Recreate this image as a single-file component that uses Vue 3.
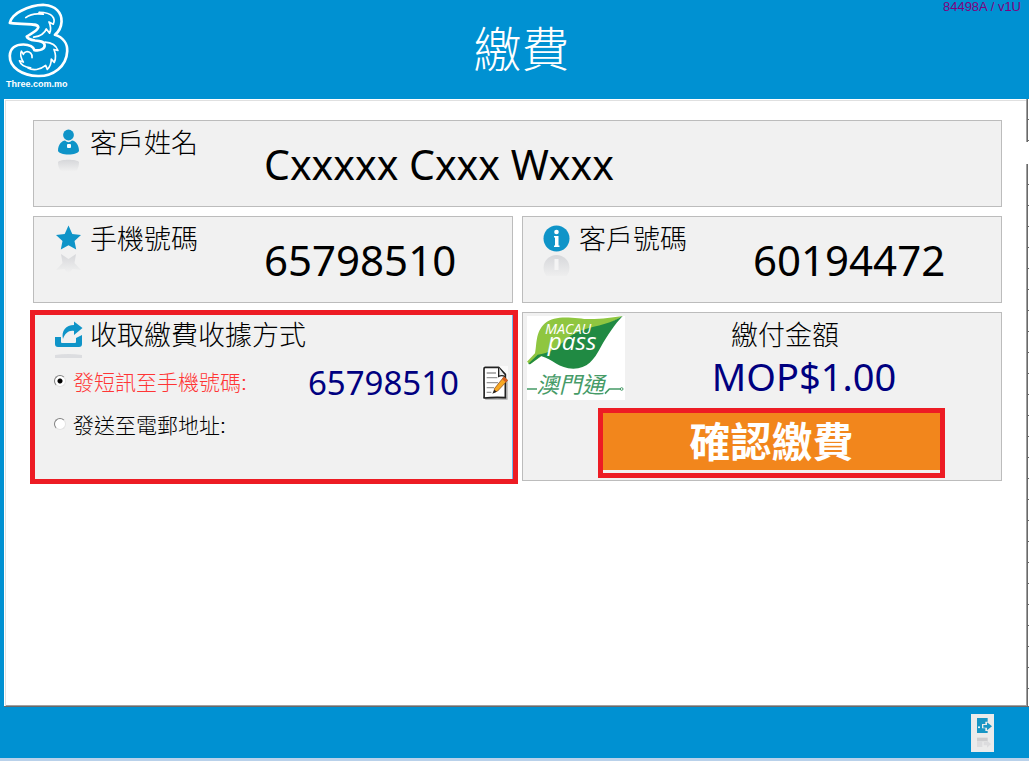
<template>
  <div class="kiosk">
    <header class="topbar">
      <div class="brand">
        <svg class="brand-logo" viewBox="18 6 198 232" fill="none" stroke="#fff" stroke-linejoin="round" stroke-linecap="round">
          <path
            stroke-width="8"
            d="M29 69C31 56 45 41 62 33C90 19 112 14 134 15C166 17 186 38 185 65C184 83 176 96 165 105C190 113 203 132 202 154C200 200 160 230 114 229C66 228 28 203 29 168C30 146 46 134 70 134C89 134 101 142 103 151C121 154 135 147 134 136C133 124 119 123 105 122C91 120 82 116 80 110C89 103 112 94 115 82C112 68 80 76 29 69Z"
          />
          <path
            stroke-width="5"
            d="M77 53C90 43 112 40 130 43L117 37C134 37 151 41 158 50C164 57 163 66 160 73L147 66C153 79 153 91 149 100L139 87C135 99 120 109 101 112"
          />
          <path
            stroke-width="5"
            d="M135 127C153 128 169 137 174 152L162 149C168 163 168 177 163 188L154 178C154 192 149 203 142 209L137 197C120 211 99 213 84 205L92 204C75 203 62 195 58 183L70 187C63 176 59 164 64 154L70 164C72 155 84 153 92 160C97 165 96 171 96 174"
          />
        </svg>
        <span class="brand-name">Three.com.mo</span>
      </div>
      <h1 class="title">繳費</h1>
      <span class="version">84498A / v1U</span>
    </header>

    <div class="body">
      <main class="sheet">
        <section v-for="field in fields" :key="field.id" class="panel field" :class="{ wide: field.wide }">
          <div class="head">
            <svg v-if="field.icon == 'person'" class="icon" viewBox="0 0 36 56">
              <circle cx="18.5" cy="11" r="5.4" fill="#0f94c8" />
              <path fill="#0f94c8" d="M8 27C8 20 12 17 15 16.500Q18.500 20 22 16.500C26 17 29 21 29 27C28 29 24 30.500 18.500 30.500S9 29 8 27Z" />
              <rect x="17" y="20" width="4" height="4" rx="1" fill="#fff" />
              <path fill="url(#fade)" d="M8 38C10 35 27 35 29 38C29 45 26 49 22 49Q18.500 45 15 49C11 48 8 45 8 38Z" />
            </svg>
            <svg v-else-if="field.icon == 'star'" class="icon" viewBox="0 0 36 56">
              <path fill="#0f94c8" d="M18.500 5.500L22.300 14L31 15L24.500 21L26.200 29.500L18.500 25.300L10.800 29.500L12.500 21L6 15L14.700 14Z" />
              <path fill="url(#fade)" d="M11 34L18.500 39L26 34L24.500 43L31 50L22.500 49L18.500 55L14.500 49L6 50L12.500 43Z" />
            </svg>
            <svg v-else class="icon" viewBox="0 0 36 56">
              <circle cx="17.500" cy="18.500" r="13" fill="#0f94c8" />
              <circle cx="17.500" cy="12" r="2.300" fill="#fff" />
              <path fill="#fff" d="M15 16H19.500V25.500H20.500V27H15V25.500H16V17.500H15Z" />
              <circle cx="17.500" cy="48" r="13" fill="url(#fade)" />
              <path fill="#f4f4f4" d="M15.500 39H19.500V50H15.500Z" />
            </svg>
            <h2 class="label">{{ field.label }}</h2>
          </div>
          <p class="value" :class="{ name: field.wide }">{{ field.value }}</p>
        </section>

        <section class="panel receipt">
          <div class="head">
            <svg class="icon" viewBox="0 0 36 56">
              <path fill="#0f94c8" d="M5 21H11V26Q11 27 12 27H25Q26 27 26 26V22L32 19V28Q32 31 29 31H8Q5 31 5 28Z" />
              <path fill="#0f94c8" d="M13 23C11 15 16 9 24 9V5.500L32.500 12L24 19V15C19 14 15 17 13 23Z" />
              <path fill="#dcdde0" d="M5 39Q18 37 32 39V42H5Z" />
            </svg>
            <h2 class="label">收取繳費收據方式</h2>
          </div>
          <div class="option">
            <input id="bySms" v-model="method" type="radio" name="method" value="sms" />
            <label for="bySms" :class="{ active: method == 'sms' }">發短訊至手機號碼:</label>
            <span class="phone">65798510</span>
            <button class="edit" type="button" aria-label="修改">
              <svg viewBox="0 0 78 102">
                <rect width="78" height="102" fill="#fafafa" />
                <path fill="#aaa" d="M8 94H73V40L77 44V101H10Z" />
                <path fill="#fff" stroke="#222" stroke-width="5" stroke-linejoin="round" d="M10 4H50L70 25V95Q40 93 6 96Q7 85 6 50V8Q6 4 10 4Z" />
                <path fill="#eee" stroke="#222" stroke-width="4" d="M50 4V31Q60 26 70 32" />
                <path stroke="#999" stroke-width="4" d="M14 21H42M14 35H46M14 50H48M14 65H36M14 79H28" />
                <path fill="#f7a823" stroke="#7c3b10" stroke-width="2" d="M66 32L77 43L47 75L35 80L38 67Z" />
                <path fill="#d65d20" d="M66 32L77 43L71 49L60 39Z" />
                <path fill="#222" d="M37 71L44 77L31 83Z" />
              </svg>
            </button>
          </div>
          <div class="option">
            <input id="byEmail" v-model="method" type="radio" name="method" value="email" />
            <label for="byEmail">發送至電郵地址:</label>
          </div>
        </section>

        <section class="panel payment">
          <svg class="pass-logo" viewBox="0 0 294 252">
            <rect width="294" height="252" fill="#fff" />
            <path fill="#8fc640" d="M0 137L24 112C30 88 24 49 54 22C88 -9 155 10 190 9C225 9 260 4 287 0L130 90L44 120L9 145Z" />
            <path fill="#208a43" d="M3 144L32 116C66 113 88 96 115 73C150 39 198 35 229 25C254 18 271 9 287 0C264 24 241 58 221 94C201 132 181 158 139 158C95 158 77 129 42 120L9 145Z" />
            <text class="pass-small" x="54" y="53">MACAU</text>
            <text class="pass-big" x="62" y="103">pass</text>
            <text class="pass-zh" x="28" y="230">澳門通</text>
            <path fill="none" stroke="#469b67" stroke-width="5" d="M0 219H30M234 233L247 219H281" />
            <circle cx="284" cy="219" r="4" fill="#fff" stroke="#469b67" stroke-width="3" />
          </svg>
          <div class="pay">
            <h2 class="label">繳付金額</h2>
            <p class="amount">MOP$1.00</p>
          </div>
          <button class="confirm" type="button">確認繳費</button>
        </section>
      </main>
      <div class="edge">
        <span class="edge-top"></span>
        <span class="edge-rest"></span>
      </div>
    </div>

    <footer class="bottombar">
      <button class="exit" type="button" aria-label="離開">
        <svg viewBox="0 0 69 114">
          <rect width="69" height="114" fill="#ebebeb" />
          <path fill="#1896c5" d="M18 12H50V23H43V30H33V43H43V51H50V57H18Z" />
          <path fill="#1896c5" d="M37 33H48V25L63 37L48 49V41H37Z" />
          <circle cx="24" cy="40" r="3" fill="#fff" />
          <path fill="#cdcdcf" d="M18 71H50V82H18Z" />
          <path fill="#dcdcde" d="M18 82H34V99H18ZM38 84H48V80L60 90L48 101V94H38Z" />
        </svg>
      </button>
    </footer>

    <svg class="defs" width="0" height="0" aria-hidden="true">
      <linearGradient id="fade" x1="0" y1="0" x2="0" y2="1">
        <stop offset="0" stop-color="#d6d7da" />
        <stop offset="0.9" stop-color="#f1f1f1" />
      </linearGradient>
    </svg>
  </div>
</template>

<script setup>
import { ref } from "vue";

const method = ref("sms");

const fields = [
  { id: 1, icon: "person", label: "客戶姓名", value: "Cxxxxx Cxxx Wxxx", wide: true },
  { id: 2, icon: "star", label: "手機號碼", value: "65798510" },
  { id: 3, icon: "info", label: "客戶號碼", value: "60194472" }
];
</script>

<style>
body {
  margin: 0;
}
</style>

<style scoped>
.kiosk {
  display: flex;
  flex-direction: column;
  box-sizing: border-box;
  min-height: 100vh;
  background: #0091d2;
  border-bottom: 3px solid #b9d1ea;
  font-family: "Noto Sans", "Noto Sans CJK TC", sans-serif;
  color: #000;
}

h1,
h2,
p {
  margin: 0;
  font-weight: 300;
}

button {
  padding: 0;
  border: none;
  background: none;
  cursor: pointer;
}

svg {
  display: block;
}

.defs {
  position: absolute;
}

/* header */
.topbar {
  display: grid;
  grid-template-columns: 1fr auto 1fr;
  height: 99px;
  padding: 0 8px 0 6px;
}

.brand-logo {
  width: 66px;
  height: 77px;
  margin-top: 2px;
}

.brand-name {
  display: block;
  font: bold 9px/11px "Liberation Sans", sans-serif;
  color: #fff;
}

.title {
  padding-left: 16px;
  font-size: 48px;
  line-height: 92px;
  font-family: "Noto Sans CJK TC", sans-serif;
  color: #fff;
}

.version {
  justify-self: end;
  font: 13px/14px "Liberation Sans", sans-serif;
  color: #800080;
}

/* content */
.body {
  display: flex;
  flex: 1;
  margin-left: 4px;
  background: #fff;
  border-bottom: 1px solid #696969;
  box-shadow: inset 0 -1px #a0a0a0;
}

.sheet {
  display: grid;
  flex: 1;
  grid-template-columns: 1fr 1fr;
  align-content: start;
  gap: 9px;
  padding: 21px 24px 20px 29px;
  box-shadow: inset 1px 1px #fff, inset 2px 2px #e0e0e0;
}

.edge {
  display: flex;
  flex-direction: column;
  justify-content: space-between;
  gap: 22px;
  width: 3px;
}

.edge span {
  box-sizing: border-box;
  border-left: 1px solid #a0a0a0;
  background: linear-gradient(90deg, #696969 50%, transparent 50%), repeating-linear-gradient(#fff 0 20px, #696969 20px 21px);
}

.edge-top {
  height: 43px;
}

.edge-rest {
  flex: 1;
}

.panel {
  position: relative;
  box-sizing: border-box;
  background: #f1f1f1;
  border: 1px solid #bcbcbc;
}

.field {
  display: flex;
  align-items: center;
  height: 87px;
}

.wide {
  grid-column: 1 / -1;
}

.head {
  display: flex;
  align-self: flex-start;
  gap: 4px;
  width: 214px;
  padding-left: 16px;
}

.icon {
  flex: none;
  width: 36px;
  height: 56px;
  margin-top: 3px;
}

.label {
  padding-top: 5px;
  font-size: 27px;
  line-height: 32px;
  font-family: "Noto Sans CJK TC", sans-serif;
  white-space: nowrap;
}

.value {
  font-size: 42px;
  line-height: 56px;
  font-weight: 400;
}

.name {
  font-size: 41px;
}

/* receipt */
.receipt {
  min-height: 169px;
  border-right-color: #6cb8f0;
}

.receipt::after {
  content: "";
  position: absolute;
  inset: -3px -6px -4px -4px;
  border: 5px solid #ed1c24;
  pointer-events: none;
}

.receipt .head {
  height: 53px;
}

.option {
  display: flex;
  align-items: center;
  height: 34px;
  margin-bottom: 9px;
  padding: 0 4px 0 20px;
  font-size: 21px;
  font-weight: 300;
}

.option label {
  flex: 1;
  padding-left: 7px;
  line-height: 34px;
  font-family: "Liberation Sans", "Noto Sans CJK TC", sans-serif;
}

.option .active {
  color: #ff3535;
}

.option input {
  appearance: none;
  box-sizing: border-box;
  width: 12px;
  height: 12px;
  margin: 0 0 4px;
  border: 1px solid;
  border-color: #808080 #e3e3e3 #e3e3e3 #808080;
  border-radius: 50%;
  background: #fff;
}

.option input:checked {
  background: radial-gradient(circle, #000 2px, #fff 3px);
}

.phone {
  margin-right: 23px;
  font-size: 33px;
  line-height: 36px;
  font-weight: 400;
  color: #000080;
}

.edit svg {
  width: 26px;
  height: 34px;
}

/* payment */
.payment {
  display: grid;
  grid-template-columns: 98px 1fr;
  align-content: start;
  padding: 3px 56px 2px 4px;
}

.pass-logo {
  width: 98px;
  height: 84px;
}

.pass-small,
.pass-big {
  font-family: "Open Sans", sans-serif;
  font-style: italic;
  fill: #fff;
}

.pass-small {
  font-size: 43px;
}

.pass-big {
  font-size: 73px;
}

.pass-zh {
  font-family: "Noto Sans CJK TC", sans-serif;
  font-size: 68px;
  font-style: italic;
  font-weight: 400;
  fill: #469b67;
}

.pay {
  text-align: center;
}

.pay .label {
  padding-top: 2px;
}

.amount {
  padding-left: 38px;
  font-size: 38px;
  line-height: 52px;
  font-weight: 400;
  color: #000080;
}

.confirm {
  grid-column: 1 / -1;
  height: 70px;
  margin: 6px 0 0 71px;
  padding-bottom: 8px;
  border: 5px solid #ed1c24;
  background: #f2861c;
  box-shadow: inset 0 -3px #f1f1f1;
  font: bold 41px/50px "Noto Sans CJK TC", sans-serif;
  color: #fff;
}

/* footer */
.bottombar {
  display: flex;
  justify-content: flex-end;
  align-items: center;
  height: 51px;
  padding-right: 35px;
}

.exit svg {
  width: 23px;
  height: 38px;
}
</style>
